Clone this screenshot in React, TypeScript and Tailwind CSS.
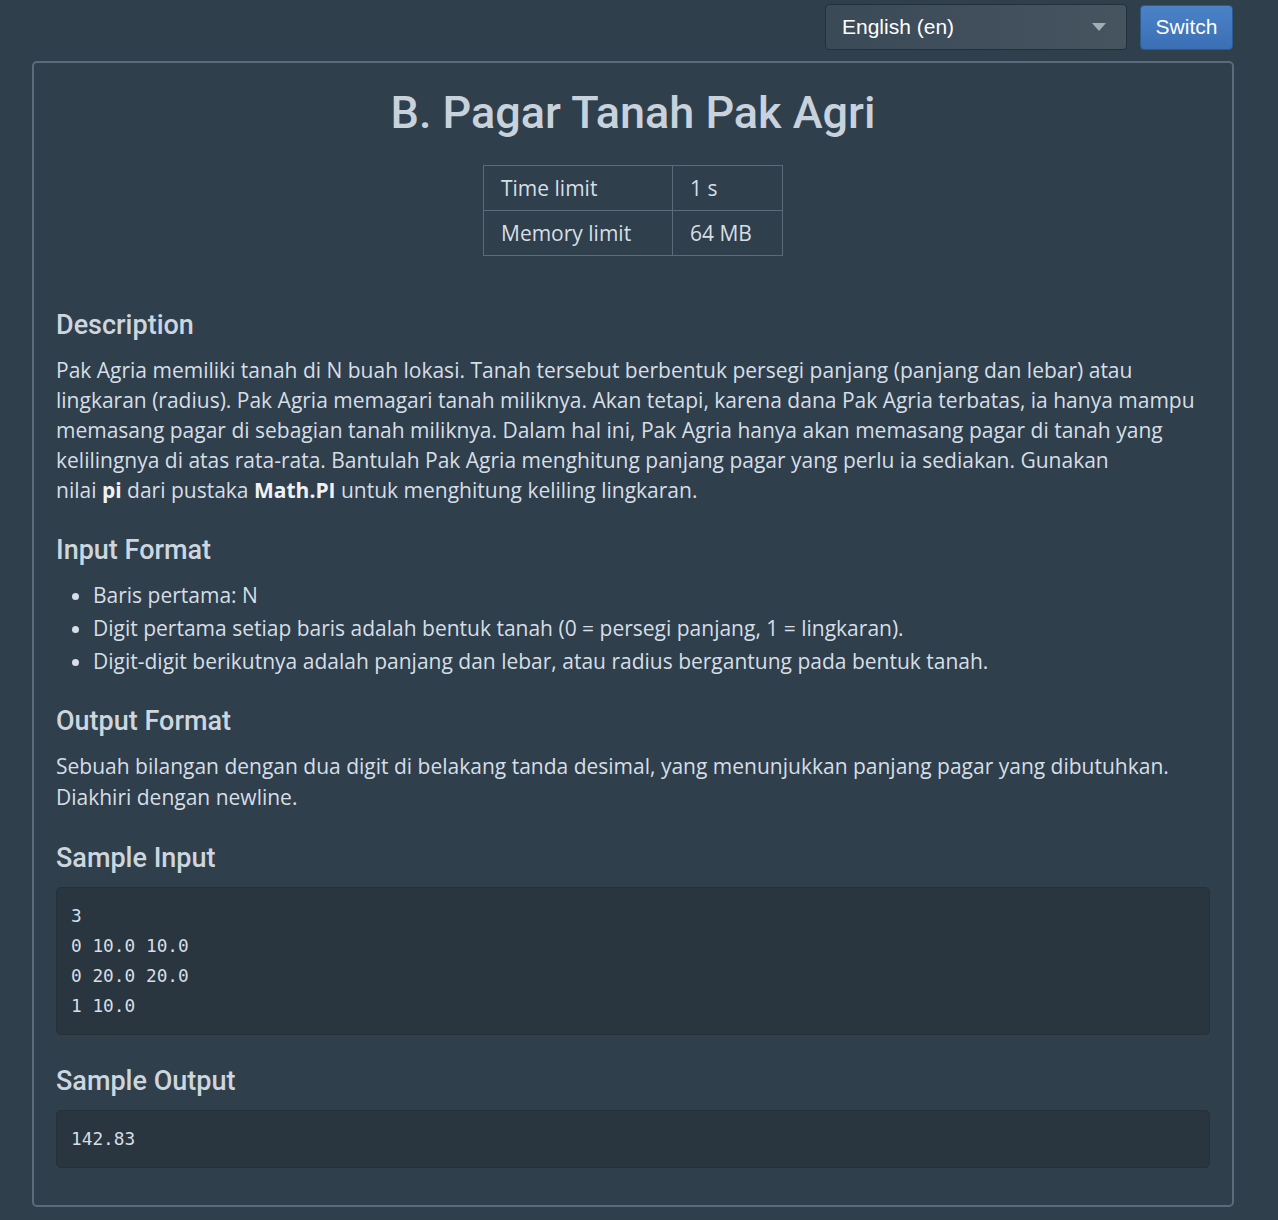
import React from 'react'

const body = "font-['Open_Sans',sans-serif] text-[21px] leading-[30px] text-[#d6dee6]"
const heading = "font-['Roboto',sans-serif] font-medium text-[27px] leading-[36px] text-[#cdd6df]"
const code = "font-['DejaVu_Sans_Mono',monospace] text-[17.8px] leading-[30px] text-[#d6dee6] whitespace-pre"

const limits = [
  { label: 'Time limit', value: '1 s' },
  { label: 'Memory limit', value: '64 MB' },
]

const inputFormat = [
  'Baris pertama: N',
  'Digit pertama setiap baris adalah bentuk tanah (0 = persegi panjang, 1 = lingkaran).',
  'Digit-digit berikutnya adalah panjang dan lebar, atau radius bergantung pada bentuk tanah.',
]

const sampleInput = ['3', '0 10.0 10.0', '0 20.0 20.0', '1 10.0']

const App = () => {
  return (
    <div className="min-h-[1220px] bg-[#303f4c] pl-8 pr-[44px] pt-1 pb-3">
      {/* language switcher */}
      <div className="flex justify-end items-center gap-[13px] pr-[1px]">
        <div className="w-[302px] h-[46px] flex items-center justify-between pl-4 pr-5 rounded-[4px] border border-[#243039] bg-gradient-to-r from-[#3b4a57] to-[#45545f] font-['Liberation_Sans',Arial,sans-serif] text-[21px] text-white">
          <span>English (en)</span>
          <span className="w-0 h-0 border-l-[7px] border-r-[7px] border-t-[8px] border-l-transparent border-r-transparent border-t-[#a3adb7]" />
        </div>
        <button className="w-[93px] h-[45px] rounded-[4px] border border-[#2c5b93] bg-gradient-to-b from-[#4b82c6] to-[#3b6fb5] font-['Liberation_Sans',Arial,sans-serif] text-[21px] text-white">
          Switch
        </button>
      </div>

      <div className="mt-[11px] rounded-[5px] border-2 border-[#5b6b7b] px-[22px] pt-[24px] pb-[37px]">
        <h1 className="text-center font-['Roboto',sans-serif] font-medium text-[45px] leading-[52px] text-[#c8d2dc]">
          B. Pagar Tanah Pak Agri
        </h1>

        <div className="flex justify-center mt-[26px]">
          <table className="border-collapse">
            <tbody>
              {limits.map((row) => (
                <tr key={row.label} className="h-[45px]">
                  <td className={`${body} w-[189px] border border-[#5b6b7b] pl-[17px]`}>{row.label}</td>
                  <td className={`${body} w-[110px] border border-[#5b6b7b] pl-[17px]`}>{row.value}</td>
                </tr>
              ))}
            </tbody>
          </table>
        </div>

        <h3 className={`${heading} mt-[51px]`}>Description</h3>
        <p className={`${body} mt-[12px]`}>
          Pak Agria memiliki tanah di N buah lokasi. Tanah tersebut berbentuk persegi panjang (panjang dan lebar) atau
          lingkaran (radius). Pak Agria memagari tanah miliknya. Akan tetapi, karena dana Pak Agria terbatas, ia hanya mampu
          memasang pagar di sebagian tanah miliknya. Dalam hal ini, Pak Agria hanya akan memasang pagar di tanah yang
          kelilingnya di atas rata-rata. Bantulah Pak Agria menghitung panjang pagar yang perlu ia sediakan. Gunakan
          <br />
          nilai <strong className="font-bold text-[#eef2f5]">pi</strong> dari pustaka{' '}
          <strong className="font-bold text-[#eef2f5]">Math.PI</strong> untuk menghitung keliling lingkaran.
        </p>

        <h3 className={`${heading} mt-[27px]`}>Input Format</h3>
        <ul className="mt-[11px] pl-[37px] list-disc marker:text-[#d6dee6]">
          {inputFormat.map((item) => (
            <li key={item} className={`${body} leading-[33px]`}>{item}</li>
          ))}
        </ul>

        <h3 className={`${heading} mt-[25px]`}>Output Format</h3>
        <p className={`${body} mt-[12px] leading-[31px]`}>
          Sebuah bilangan dengan dua digit di belakang tanda desimal, yang menunjukkan panjang pagar yang dibutuhkan.
          <br />
          Diakhiri dengan newline.
        </p>

        <h3 className={`${heading} mt-[27px]`}>Sample Input</h3>
        <pre className={`${code} mt-[11px] rounded-[5px] border border-[#25303a] bg-[#29353f] px-[14px] py-[13px]`}>
          {sampleInput.join('\n')}
        </pre>

        <h3 className={`${heading} mt-[28px]`}>Sample Output</h3>
        <pre className={`${code} mt-[11px] rounded-[5px] border border-[#25303a] bg-[#29353f] px-[14px] py-[13px]`}>
          142.83
        </pre>
      </div>
    </div>
  )
}

export default App
